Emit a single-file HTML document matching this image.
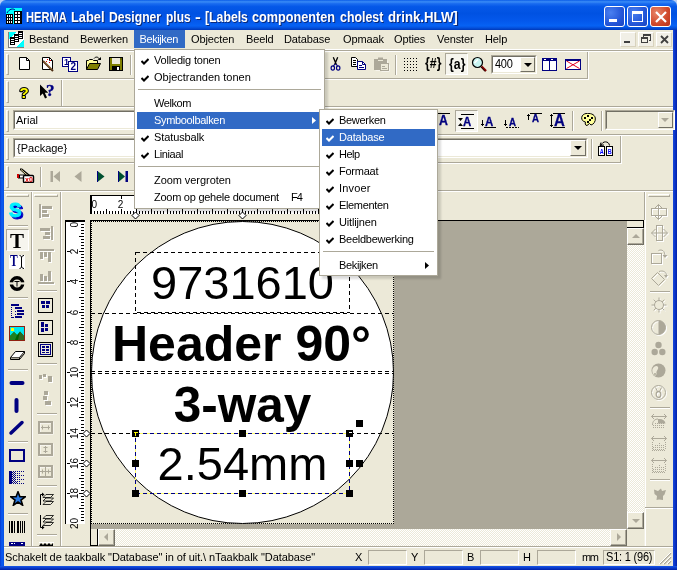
<!DOCTYPE html>
<html><head><meta charset="utf-8">
<style>
html,body{margin:0;padding:0;}
body{width:677px;height:570px;overflow:hidden;position:relative;background:#ECE9D8;font-family:"Liberation Sans",sans-serif;font-size:11px;color:#000;}
div,span,svg{position:absolute;box-sizing:border-box;}
.t{white-space:nowrap;line-height:14px;height:14px;}
/* window frame */
#title{left:0;top:0;width:677px;height:30px;background:linear-gradient(#0a5ce8 0%,#3a8cf6 6%,#1a6cf0 12%,#0558e8 22%,#0052e2 45%,#0458ec 70%,#0662f4 86%,#0450dc 93%,#0038b8 100%);border-radius:6px 6px 0 0;}
#bl{left:0;top:30px;width:4px;height:540px;background:linear-gradient(90deg,#0838d0,#0a55ea 35%,#0a58f0 60%,#0850e0);}
#br{left:673px;top:30px;width:4px;height:540px;background:linear-gradient(90deg,#1848d8,#0c38cc 40%,#0020a8);}
#bb{left:0;top:566px;width:677px;height:4px;background:linear-gradient(#1858e8,#0c40d0 40%,#0020a8);}
#ttext{left:26px;top:9px;color:#fff;font-weight:bold;font-size:13px;line-height:16px;white-space:nowrap;text-shadow:1px 1px 0 #0a2a7a;}
.tb{top:6px;width:21px;height:21px;border-radius:3px;border:1px solid #fff;background:radial-gradient(circle at 30% 30%,#4a80f0,#2456d8 60%,#1a44c0);}
/* menu bar */
#menubar{left:4px;top:30px;width:669px;height:20px;background:#ECE9D8;}
.mi{top:32px;letter-spacing:-0.1px}
/* generic */
.hl{background:#fff;height:1px;}
.sh{background:#ACA899;height:1px;}
.vhl{background:#fff;width:1px;}
.vsh{background:#ACA899;width:1px;}
.grip{width:3px;border-left:1px solid #fff;border-top:1px solid #fff;border-right:1px solid #ACA899;border-bottom:1px solid #ACA899;}
.sep{width:2px;border-left:1px solid #ACA899;border-right:1px solid #fff;}
.menu{background:#fff;border:1px solid #ACA899;box-shadow:3px 3px 2px rgba(0,0,0,0.14);}
.menu .it{left:2px;height:17px;line-height:17px;white-space:nowrap;}
.menu .sel{background:#316AC5;color:#fff;}
.combo{background:#fff;border:1px solid #7F9DB9;}

.hgrip{height:3px;border-left:1px solid #fff;border-top:1px solid #fff;border-right:1px solid #ACA899;border-bottom:1px solid #ACA899;}
.hsep{height:2px;border-top:1px solid #ACA899;border-bottom:1px solid #fff;}
.track{background-color:#fff;background-image:conic-gradient(#ECE9D8 25%,#fff 0 50%,#ECE9D8 0 75%,#fff 0);background-size:2px 2px;}
.btn{background:#ECE9D8;border:1px solid;border-color:#fff #716F64 #716F64 #fff;box-shadow:inset -1px -1px 0 #ACA899;}

.doc{text-align:center;white-space:nowrap;color:#000;}
.hd{width:7px;height:7px;background:#000;}

.menu .t{position:absolute}
.msep{left:3px;height:1px;background:#ACA899;}
.pane{border:1px solid;border-color:#ACA899 #fff #fff #ACA899;}
.mdib{top:32px;width:16px;height:15px;background:#F1EFE6;border:1px solid;border-color:#fff #D8D2BD #D8D2BD #fff}
.tw{top:0;transform-origin:0 3px;white-space:nowrap}
</style></head><body><div id="root" style="left:0;top:0;width:677px;height:570px;will-change:transform">

<!-- title bar -->
<div style="left:0;top:0;width:8px;height:8px;background:#B9CFF5"></div><div style="left:669px;top:0;width:8px;height:8px;background:#B9CFF5"></div>
<div id="title"></div>
<div id="ttext"><span class="tw" style="left:0.3px;transform:scale(0.858,1.1)">HERMA</span><span class="tw" style="left:45.1px;transform:scale(0.986,1.1)">Label</span><span class="tw" style="left:82.5px;transform:scale(0.936,1.1)">Designer</span><span class="tw" style="left:139.6px;transform:scale(0.920,1.1)">plus</span><span class="tw" style="left:168.5px;transform:scale(1.335,1.1)">-</span><span class="tw" style="left:178.7px;transform:scale(0.943,1.1)">[Labels</span><span class="tw" style="left:226.4px;transform:scale(0.974,1.1)">componenten</span><span class="tw" style="left:313.7px;transform:scale(0.951,1.1)">cholest</span><span class="tw" style="left:362.0px;transform:scale(1.017,1.1)">drink.HLW]</span></div>
<div class="tb" style="left:604px"></div>
<div class="tb" style="left:627px"></div>
<div class="tb" style="left:650px;background:radial-gradient(circle at 30% 30%,#e8866a,#d0482a 60%,#b8321a);"></div>

<div style="left:609px;top:19px;width:8px;height:3px;background:#fff"></div>
<div style="left:632px;top:11px;width:11px;height:11px;border:1px solid #fff;border-top-width:3px"></div>
<svg style="left:654px;top:10px" width="14" height="14" viewBox="0 0 14 14"><path d="M2 2L12 12M12 2L2 12" stroke="#fff" stroke-width="2.200"/></svg>
<!-- title icon -->
<svg style="left:6px;top:8px" width="16" height="16" viewBox="0 0 16 16" shape-rendering="crispEdges"><rect width="16" height="16" fill="#00FFFF"/><rect x="0" y="6" width="7" height="10" fill="#000"/><rect x="8" y="3" width="8" height="13" fill="#000"/><path d="M1 5C3 1 7 0 9 2" stroke="#000080" fill="none" shape-rendering="auto"/>
<g fill="#fff"><rect x="1" y="7" width="1" height="2"/><rect x="3" y="7" width="1" height="2"/><rect x="5" y="7" width="1" height="2"/><rect x="1" y="10" width="1" height="2"/><rect x="3" y="10" width="1" height="2"/><rect x="5" y="10" width="1" height="2"/><rect x="1" y="13" width="1" height="2"/><rect x="3" y="13" width="1" height="2"/><rect x="5" y="13" width="1" height="2"/>
<rect x="9" y="4" width="2" height="2"/><rect x="12" y="4" width="2" height="2"/><rect x="9" y="7" width="2" height="2"/><rect x="12" y="7" width="2" height="2"/><rect x="9" y="10" width="2" height="2"/><rect x="12" y="10" width="2" height="2"/><rect x="9" y="13" width="2" height="2"/><rect x="12" y="13" width="2" height="2"/></g></svg>
<div id="bl"></div><div id="br"></div><div id="bb"></div>

<!-- menu bar -->
<div id="menubar"></div>
<div class="t mi" style="left:29px">Bestand</div>
<div class="t mi" style="left:80px">Bewerken</div>
<div style="left:134px;top:30px;width:51px;height:18px;background:#316AC5"></div>
<div class="t mi" style="left:139.500px;color:#fff;letter-spacing:-0.4px">Bekijken</div>
<div class="t mi" style="left:191px">Objecten</div>
<div class="t mi" style="left:246px">Beeld</div>
<div class="t mi" style="left:284px">Database</div>
<div class="t mi" style="left:343px">Opmaak</div>
<div class="t mi" style="left:394px">Opties</div>
<div class="t mi" style="left:437px">Venster</div>
<div class="t mi" style="left:485px">Help</div>

<!-- toolbars placeholder -->


<svg style="left:8px;top:31px" width="16" height="17" viewBox="0 0 16 17" shape-rendering="crispEdges"><rect x="1" y="1" width="15" height="15" fill="#fff"/><path d="M1 1H8L1 9Z" fill="#00FFFF"/><path d="M16 8V16H8Z" fill="#00FFFF"/><rect x="0" y="1" width="1" height="16" fill="#808080"/><rect x="0" y="16" width="16" height="1" fill="#808080"/>
<g fill="#000"><rect x="10" y="0" width="5" height="8"/><rect x="6" y="3" width="5" height="8"/><rect x="2" y="6" width="5" height="8"/></g>
<g fill="#fff"><rect x="11" y="2" width="3" height="1"/><rect x="11" y="4" width="3" height="1"/><rect x="11" y="6" width="3" height="1"/><rect x="7" y="5" width="3" height="1"/><rect x="7" y="7" width="3" height="1"/><rect x="7" y="9" width="3" height="1"/><rect x="3" y="8" width="3" height="1"/><rect x="3" y="10" width="3" height="1"/><rect x="3" y="12" width="3" height="1"/></g></svg>
<div class="mdib" style="left:620px"></div><div class="mdib" style="left:638px"></div><div class="mdib" style="left:656px"></div>
<div style="left:624px;top:41px;width:6px;height:2px;background:#404040"></div>
<svg style="left:641px;top:34px" width="10" height="10" viewBox="0 0 10 10" shape-rendering="crispEdges"><path d="M2.500 2.500V1H9.500V6.500H7.500" fill="none" stroke="#404040" stroke-width="1"/><rect x="2" y="0" width="8" height="2" fill="#404040"/><rect x="0.500" y="3.500" width="6" height="5" fill="none" stroke="#404040"/><rect x="0" y="3" width="7" height="2" fill="#404040"/></svg>
<svg style="left:660px;top:35px" width="9" height="9" viewBox="0 0 9 9"><path d="M1 1L8 8M8 1L1 8" stroke="#404040" stroke-width="1.800"/></svg>
<!-- toolbar rows: highlight/shadow lines -->
<div class="hl" style="left:4px;top:49px;width:669px"></div>
<div class="sh" style="left:4px;top:50px;width:669px"></div>
<div class="hl" style="left:4px;top:51px;width:669px"></div>
<!-- row1 51-79 -->
<div class="sh" style="left:4px;top:78px;width:584px"></div>
<div class="hl" style="left:4px;top:79px;width:585px"></div>
<div class="vsh" style="left:587px;top:52px;height:27px"></div>
<div class="vhl" style="left:588px;top:52px;height:28px"></div>
<div class="grip" style="left:6px;top:54px;height:21px"></div>
<!-- row2 79-107 -->
<div class="vsh" style="left:61px;top:80px;height:26px"></div>
<div class="vhl" style="left:62px;top:80px;height:26px"></div>
<div class="sh" style="left:4px;top:106px;width:669px"></div>
<div class="hl" style="left:4px;top:107px;width:669px"></div>
<div class="grip" style="left:6px;top:81px;height:22px"></div>
<!-- row3 107-135 -->
<div class="sh" style="left:4px;top:134px;width:669px"></div>
<div class="hl" style="left:4px;top:135px;width:669px"></div>
<div class="grip" style="left:6px;top:110px;height:22px"></div>
<!-- row4 135-163 -->
<div class="sh" style="left:4px;top:162px;width:617px"></div>
<div class="hl" style="left:4px;top:163px;width:618px"></div>
<div class="vsh" style="left:620px;top:136px;height:27px"></div>
<div class="vhl" style="left:621px;top:136px;height:28px"></div>
<div class="grip" style="left:6px;top:138px;height:22px"></div>
<!-- row5 163-191 -->
<div class="sh" style="left:4px;top:190px;width:669px"></div>
<div class="hl" style="left:4px;top:191px;width:669px"></div>
<div class="grip" style="left:6px;top:166px;height:22px"></div>

<!-- row1 separators -->
<div class="sep" style="left:130px;top:55px;height:20px"></div>
<div class="sep" style="left:395px;top:55px;height:20px"></div>
<!-- row1 pressed {a} button -->
<div style="left:445px;top:53px;width:23px;height:22px;background:#F6F5EE;border:1px solid;border-color:#ACA899 #fff #fff #ACA899"></div>
<!-- zoom combo -->
<div style="left:491px;top:55px;width:46px;height:19px;background:#fff;border:1px solid;border-color:#ACA899 #fff #fff #ACA899"></div>
<div style="left:492px;top:56px;width:44px;height:17px;border:1px solid;border-color:#716F64 #ECE9D8 #ECE9D8 #716F64"></div>
<div style="left:520px;top:57px;width:15px;height:15px;background:#ECE9D8;border:1px solid;border-color:#fff #716F64 #716F64 #fff"></div>
<div style="left:524px;top:63px;width:0;height:0;border:4px solid transparent;border-top-color:#000;border-bottom:none"></div>
<div class="t" style="left:495px;top:57px;font-size:11px;letter-spacing:-0.3px;transform:scaleY(1.08)">400</div>

<!--ICONS1--><svg style="left:19px;top:57px" width="12" height="13" viewBox="0 0 12 13" ><path d="M0.5 0.5H7.5L10.5 3.5V12.5H0.5Z" fill="#fff" stroke="#000"/><path d="M7.5 0.5V3.5H10.5" fill="none" stroke="#000"/></svg>
<svg style="left:41px;top:56px" width="14" height="16" viewBox="0 0 14 16" ><path d="M1.500 1.500H8.500L11.500 4.500V13.500H1.500Z" fill="#fff" stroke="#000"/><path d="M8.5 1.5V4.500H11.5" fill="none" stroke="#000"/><path d="M2 5L12 15" stroke="#4a2a10" stroke-width="2"/><path d="M3 5.500L11 13.500" stroke="#c8a060" stroke-width="0.800"/><rect x="6" y="3" width="1" height="1" fill="#d00"/><rect x="8" y="6" width="1" height="1" fill="#d00"/><rect x="9" y="4" width="1" height="1" fill="#d00"/><rect x="5" y="5" width="1" height="1" fill="#d00"/></svg>
<svg style="left:62px;top:57px" width="16" height="15" viewBox="0 0 16 15" ><rect x="0.500" y="0.500" width="8" height="9" fill="#fff" stroke="#000080"/><rect x="6.500" y="4.500" width="9" height="10" fill="#fff" stroke="#000080"/><text x="2" y="8" font-family="Liberation Sans,sans-serif" font-weight="bold" font-size="9" fill="#000080">1</text><text x="8.500" y="13" font-family="Liberation Sans,sans-serif" font-weight="bold" font-size="10" fill="#000080">2</text></svg>
<svg style="left:85px;top:56px" width="17" height="15" viewBox="0 0 17 15" ><path d="M1.500 13.500V4.500H3.500L4.500 3.500H7.500L8.500 4.500H12.500V7.500" fill="#FFFF99" stroke="#000"/><path d="M1.500 13.500L4.500 7.500H15.500L12.500 13.500Z" fill="#808000" stroke="#000"/><path d="M9 2.500C10.500 0.500 13.500 0.500 14.500 3.500" fill="none" stroke="#000"/><path d="M12.500 4H16V1Z" fill="#000"/></svg>
<svg style="left:109px;top:57px" width="14" height="14" viewBox="0 0 14 14" ><rect x="0.500" y="0.500" width="13" height="13" fill="#808000" stroke="#000"/><rect x="3" y="1" width="8" height="6" fill="#ECE9D8"/><rect x="3" y="9" width="8" height="4" fill="#000"/><rect x="8" y="10" width="2" height="3" fill="#fff"/><rect x="11.500" y="1.500" width="1" height="1" fill="#000"/></svg><!--/ICONS1-->
<!--ICONS2--><svg style="left:330px;top:57px" width="11" height="14" viewBox="0 0 11 14" ><path d="M3.300 0.300L6.300 7.500M7.700 0.300L4.700 7.500" stroke="#000" stroke-width="1.300" fill="none"/><ellipse cx="2.800" cy="11" rx="1.700" ry="2.200" fill="none" stroke="#000080" stroke-width="1.200"/><ellipse cx="8.200" cy="11" rx="1.700" ry="2.200" fill="none" stroke="#000080" stroke-width="1.200"/><path d="M4.900 7L3.500 9M6.100 7L7.500 9" stroke="#000080" stroke-width="1.200"/></svg>
<svg style="left:351px;top:57px" width="16" height="13" viewBox="0 0 16 13" ><path d="M0.500 0.500H4.500L6.500 2.500V9.500H0.500Z" fill="#fff" stroke="#000"/><path d="M2 3.500H5M2 5.500H5M2 7.500H5" stroke="#000"/><path d="M6.500 4.500H11.500L14.500 7.500V12.500H6.500Z" fill="#fff" stroke="#000080"/><path d="M11.500 4.500V7.500H14.500" fill="none" stroke="#000080"/><path d="M8 8.500H11M8 10.500H13" stroke="#000080"/></svg>
<svg style="left:374px;top:57px" width="16" height="15" viewBox="0 0 16 15" ><rect x="1.500" y="3.500" width="12" height="10" fill="#fff" stroke="none"/><rect x="0.500" y="2.500" width="12" height="10" fill="#ACA899" stroke="#ACA899"/><rect x="4" y="0.500" width="5" height="3" fill="#ACA899"/><rect x="4" y="3" width="5" height="1" fill="#ECE9D8"/><rect x="7.500" y="7.500" width="8" height="7" fill="#fff"/><rect x="6.500" y="6.500" width="8" height="7" fill="#ECE9D8" stroke="#ACA899"/><path d="M8 9.500H11M8 11.500H13" stroke="#ACA899"/></svg>
<svg style="left:404px;top:58px" width="13" height="13" viewBox="0 0 13 13" shape-rendering="crispEdges"><rect x="0" y="0" width="1" height="1" fill="#000"/><rect x="0" y="3" width="1" height="1" fill="#000"/><rect x="0" y="6" width="1" height="1" fill="#000"/><rect x="0" y="9" width="1" height="1" fill="#000"/><rect x="0" y="12" width="1" height="1" fill="#000"/><rect x="3" y="0" width="1" height="1" fill="#000"/><rect x="3" y="3" width="1" height="1" fill="#000"/><rect x="3" y="6" width="1" height="1" fill="#000"/><rect x="3" y="9" width="1" height="1" fill="#000"/><rect x="3" y="12" width="1" height="1" fill="#000"/><rect x="6" y="0" width="1" height="1" fill="#000"/><rect x="6" y="3" width="1" height="1" fill="#000"/><rect x="6" y="6" width="1" height="1" fill="#000"/><rect x="6" y="9" width="1" height="1" fill="#000"/><rect x="6" y="12" width="1" height="1" fill="#000"/><rect x="9" y="0" width="1" height="1" fill="#000"/><rect x="9" y="3" width="1" height="1" fill="#000"/><rect x="9" y="6" width="1" height="1" fill="#000"/><rect x="9" y="9" width="1" height="1" fill="#000"/><rect x="9" y="12" width="1" height="1" fill="#000"/><rect x="12" y="0" width="1" height="1" fill="#000"/><rect x="12" y="3" width="1" height="1" fill="#000"/><rect x="12" y="6" width="1" height="1" fill="#000"/><rect x="12" y="9" width="1" height="1" fill="#000"/><rect x="12" y="12" width="1" height="1" fill="#000"/></svg>
<div class="t" style="left:425px;top:55px;font-size:14px;font-weight:bold;line-height:17px;height:17px;transform:scaleX(0.88);transform-origin:0 0">{#}</div>
<div class="t" style="left:449px;top:56px;font-size:14px;font-weight:bold;line-height:17px;height:17px;transform:scaleX(0.88);transform-origin:0 0">{a}</div>
<svg style="left:471px;top:56px" width="17" height="17" viewBox="0 0 17 17" ><circle cx="6.500" cy="6.500" r="5" fill="#c8f4f0" stroke="#000" stroke-width="1.200"/><path d="M3.500 7L7 3.500" stroke="#fff" stroke-width="1.500"/><path d="M10.500 10.500L15 15" stroke="#800000" stroke-width="2.400"/><path d="M10 11L14 15.500" stroke="#000" stroke-width="0.800"/></svg>
<svg style="left:542px;top:58px" width="15" height="13" viewBox="0 0 15 13" ><rect x="0.500" y="0.500" width="14" height="12" fill="#fff" stroke="#000080"/><rect x="0" y="0" width="15" height="3" fill="#000080"/><rect x="7" y="0" width="1" height="13" fill="#000080"/><rect x="2" y="1" width="2" height="1" fill="#fff"/><rect x="9" y="1" width="2" height="1" fill="#fff"/></svg>
<svg style="left:565px;top:59px" width="16" height="11" viewBox="0 0 16 11" ><rect x="0.500" y="0.500" width="15" height="10" fill="#fff" stroke="#000080"/><rect x="0" y="0" width="16" height="2" fill="#000080"/><path d="M1.500 2L14.500 9.500M14.500 2L1.500 9.500" stroke="#e00020" stroke-width="1"/></svg>
<svg style="left:17px;top:83px" width="14" height="18" viewBox="0 0 14 18" ><text x="7" y="14.500" text-anchor="middle" font-family="Liberation Sans,sans-serif" font-weight="bold" font-size="15" fill="#FFFF00" stroke="#000" stroke-width="2.200" paint-order="stroke" stroke-linejoin="round">?</text></svg>
<svg style="left:40px;top:84px" width="9" height="15" viewBox="0 0 9 15" ><path d="M0 0.500V12L2.800 9.500L5 14.500L7 13.500L4.800 8.800H8.300Z" fill="#000"/></svg>
<div class="t" style="left:46px;top:82px;font-family:Liberation Serif,serif;font-size:17px;font-weight:bold;line-height:18px;height:18px;color:#000080;-webkit-text-stroke:0.4px #000080">?</div><!--/ICONS2-->
<!-- row3 -->
<div style="left:13px;top:110px;width:320px;height:20px;background:#fff;border:1px solid;border-color:#ACA899 #fff #fff #ACA899"></div><div style="left:14px;top:111px;width:318px;height:18px;border:1px solid;border-color:#716F64 #ECE9D8 #ECE9D8 #716F64"></div>
<div class="t" style="left:16px;top:113px">Arial</div>
<div style="left:455px;top:110px;width:23px;height:22px;background:#F6F5EE;border:1px solid;border-color:#ACA899 #fff #fff #ACA899"></div>
<div class="sep" style="left:572px;top:111px;height:20px"></div>
<div class="sep" style="left:601px;top:111px;height:20px"></div>
<div style="left:605px;top:110px;width:70px;height:20px;border:1px solid;border-color:#ACA899 #fff #fff #ACA899"></div>
<div style="left:606px;top:111px;width:68px;height:18px;border:1px solid;border-color:#716F64 #ECE9D8 #ECE9D8 #716F64"></div>
<div style="left:658px;top:112px;width:15px;height:16px;background:#ECE9D8;border:1px solid;border-color:#fff #716F64 #716F64 #fff"></div>
<div style="left:661px;top:118px;width:0;height:0;border:4px solid transparent;border-top-color:#ACA899;border-bottom:none"></div>

<!-- row4 -->
<div style="left:13px;top:138px;width:575px;height:20px;background:#fff;border:1px solid;border-color:#ACA899 #fff #fff #ACA899"></div>
<div style="left:14px;top:139px;width:573px;height:18px;border:1px solid;border-color:#716F64 #ECE9D8 #ECE9D8 #716F64"></div>
<div style="left:570px;top:140px;width:16px;height:16px;background:#ECE9D8;border:1px solid;border-color:#fff #716F64 #716F64 #fff"></div>
<div style="left:574px;top:146px;width:0;height:0;border:4px solid transparent;border-top-color:#000;border-bottom:none"></div>
<div class="t" style="left:17px;top:141px">{Package}</div>
<div class="sep" style="left:591px;top:139px;height:20px"></div>

<!-- row5 -->
<div class="sep" style="left:40px;top:167px;height:20px"></div>


<!-- workspace -->

<!--ICONS3--><div style="left:438px;top:113px;width:12px;height:1px;background:#000"></div>
<div class="t" style="left:439px;top:113px;font-size:14px;font-weight:bold;line-height:14px;height:14px;color:#000080;transform:scaleX(0.88);transform-origin:0 0;-webkit-text-stroke:0.3px #000080">A</div>
<div style="left:461px;top:114px;width:13px;height:1px;background:#000"></div>
<div class="t" style="left:463px;top:115px;font-size:13px;font-weight:bold;line-height:13px;height:13px;color:#000080;transform:scaleX(0.88);transform-origin:0 0;-webkit-text-stroke:0.3px #000080">A</div>
<div style="left:461px;top:128px;width:13px;height:1px;background:#000"></div>
<svg style="left:458px;top:118px" width="5" height="8" viewBox="0 0 5 8" ><path d="M0 0H5L2.500 3Z M0 8H5L2.500 5Z" fill="#000"/></svg>
<div style="left:482px;top:120px;width:1px;height:6px;background:#000"></div><div style="left:481px;top:124px;width:3px;height:1px;background:#000"></div>
<div class="t" style="left:485px;top:115px;font-size:13px;font-weight:bold;line-height:13px;height:13px;color:#000080;transform:scaleX(0.88);transform-origin:0 0;-webkit-text-stroke:0.3px #000080">A</div>
<div style="left:484px;top:127px;width:12px;height:1px;background:#000"></div>
<div style="left:505px;top:120px;width:1px;height:6px;background:#000"></div><div style="left:504px;top:124px;width:3px;height:1px;background:#000"></div>
<div class="t" style="left:509px;top:117px;font-size:11px;font-weight:bold;line-height:11px;height:11px;color:#000080;transform:scaleX(0.88);transform-origin:0 0;-webkit-text-stroke:0.3px #000080">A</div>
<div style="left:506px;top:127px;width:13px;height:1px;background:repeating-linear-gradient(90deg,#000 0 2px,transparent 2px 3px)"></div>
<div style="left:528px;top:114px;width:1px;height:6px;background:#000"></div><div style="left:527px;top:115px;width:3px;height:1px;background:#000"></div>
<div style="left:530px;top:113px;width:12px;height:1px;background:#000"></div>
<div class="t" style="left:532px;top:113px;font-size:11px;font-weight:bold;line-height:11px;height:11px;color:#000080;transform:scaleX(0.88);transform-origin:0 0;-webkit-text-stroke:0.3px #000080">A</div>
<div style="left:551px;top:114px;width:1px;height:13px;background:#000"></div><div style="left:550px;top:115px;width:3px;height:1px;background:#000"></div><div style="left:550px;top:125px;width:3px;height:1px;background:#000"></div>
<div style="left:553px;top:113px;width:12px;height:1px;background:#000"></div>
<div class="t" style="left:554px;top:112px;font-size:17px;font-weight:bold;line-height:17px;height:17px;color:#000080;transform:scaleX(0.88);transform-origin:0 0;-webkit-text-stroke:0.3px #000080">A</div>
<div style="left:553px;top:127px;width:12px;height:1px;background:#000"></div>
<svg style="left:581px;top:113px" width="15" height="14" viewBox="0 0 15 14" ><path d="M5 0.500C9 0 13.500 1 14.300 5C14.800 8.500 12.500 11.500 10 12L8.500 10.500L6 12.500C4 12.500 4 10 4.500 9C2 8.500 0.500 7 0.700 4.500C1 2 3 1 5 0.500Z" fill="#FFFF99" stroke="#000" stroke-width="1"/><rect x="3" y="4" width="2" height="2" fill="#000"/><rect x="6" y="2" width="2" height="2" fill="#000"/><rect x="10" y="4" width="2" height="2" fill="#000"/><rect x="8" y="6" width="2" height="2" fill="#000"/><rect x="6" y="8" width="2" height="2" fill="#000"/></svg>
<svg style="left:598px;top:140px" width="16" height="16" viewBox="0 0 16 16" ><rect x="0.500" y="6.500" width="6" height="9" fill="#fff" stroke="#000"/><rect x="8.500" y="6.500" width="6" height="9" fill="#fff" stroke="#000"/><path d="M3.500 5C4 1 11 0.500 11.500 5.500" fill="none" stroke="#000"/><path d="M2 5.500L3 2.500M2 5.500L6 5" stroke="#000" fill="none"/><text x="1.700" y="13.700" font-family="Liberation Sans,sans-serif" font-weight="bold" font-size="6.500" textLength="4" lengthAdjust="spacingAndGlyphs" fill="#00f">A</text><text x="9.700" y="13.700" font-family="Liberation Sans,sans-serif" font-weight="bold" font-size="6.500" textLength="4" lengthAdjust="spacingAndGlyphs" fill="#00f">B</text></svg>
<svg style="left:17px;top:168px" width="18" height="15" viewBox="0 0 18 15" ><path d="M3 0.500L5 0.500L13 7L11 9L3 2Z" fill="#000"/><path d="M4 1.500L11.500 8" stroke="#e8e0a0" stroke-width="1"/><path d="M1 6.500H9V10.500H1Z" fill="#000"/><rect x="0" y="6" width="2" height="4" fill="#c00"/><rect x="3" y="7.500" width="5" height="2" fill="#fff"/><rect x="6.500" y="7.500" width="10" height="7" rx="1" fill="#fff" stroke="#000" stroke-width="1.400"/><text x="8" y="13.800" font-family="Liberation Sans,sans-serif" font-weight="bold" font-size="7" fill="#d00">x0</text></svg>
<svg style="left:50px;top:171px" width="10" height="11" viewBox="0 0 10 11" ><rect x="0.500" y="0" width="2.500" height="11" fill="#ACA899"/><path d="M10 0V11L3.500 5.500Z" fill="#ACA899"/></svg>
<svg style="left:74px;top:171px" width="8" height="11" viewBox="0 0 8 11" ><path d="M7.500 0V11L0.500 5.500Z" fill="#ACA899"/></svg>
<svg style="left:97px;top:171px" width="8" height="11" viewBox="0 0 8 11" ><path d="M0.500 0V11L7.500 5.500Z" fill="#005030"/><path d="M0.500 0V11" stroke="#000080" stroke-width="1"/></svg>
<svg style="left:118px;top:171px" width="10" height="11" viewBox="0 0 10 11" ><path d="M0.500 0V11L7 5.500Z" fill="#005030"/><path d="M0.500 0V11" stroke="#000080" stroke-width="1"/><rect x="7.500" y="0" width="2.500" height="11" fill="#000080"/></svg><!--/ICONS3-->
<!-- left palette 1: x 4-31 -->
<div class="vsh" style="left:31px;top:192px;height:354px"></div>
<div class="vhl" style="left:32px;top:192px;height:354px"></div>
<div class="vsh" style="left:60px;top:192px;height:354px"></div>
<div class="vhl" style="left:61px;top:192px;height:354px"></div>
<div class="hgrip" style="left:6px;top:194px;width:23px"></div>
<div class="hgrip" style="left:34px;top:194px;width:24px"></div>
<div class="hsep" style="left:8px;top:225px;width:20px"></div>
<div class="hsep" style="left:8px;top:297px;width:20px"></div>
<div class="hsep" style="left:8px;top:369px;width:20px"></div>
<div class="hsep" style="left:8px;top:441px;width:20px"></div>
<div class="hsep" style="left:8px;top:513px;width:20px"></div>
<div class="hsep" style="left:37px;top:290px;width:20px"></div>
<div class="hsep" style="left:37px;top:363px;width:20px"></div>
<div class="hsep" style="left:37px;top:413px;width:20px"></div>
<div class="hsep" style="left:37px;top:485px;width:20px"></div>
<div class="hsep" style="left:37px;top:534px;width:20px"></div>
<!-- pressed T button -->
<div style="left:6px;top:229px;width:23px;height:22px;background:#F6F5EE;border:1px solid;border-color:#ACA899 #fff #fff #ACA899"></div>

<!--ICONS4--><div class="t" style="left:11px;top:201px;font-size:21px;font-weight:bold;line-height:22px;height:22px;color:#0000C0;-webkit-text-stroke:1px #0000C0;transform:scaleX(0.9);transform-origin:0 0">S</div>
<div class="t" style="left:9px;top:199px;font-size:21px;font-weight:bold;line-height:22px;height:22px;color:#00F0FF;-webkit-text-stroke:1px #00F0FF;transform:scaleX(0.9);transform-origin:0 0">S</div>
<div class="t" style="left:10px;top:230px;font-family:'Liberation Serif',serif;font-size:21px;line-height:22px;height:22px;font-weight:bold">T</div>
<div style="left:9px;top:255px;width:16px;height:14px;background:#fff"></div>
<div class="t" style="left:10px;top:253px;font-family:'Liberation Serif',serif;font-size:16px;line-height:16px;height:16px;font-weight:bold;color:#000080;transform:scaleX(0.72);transform-origin:0 0">T</div>
<svg style="left:19px;top:255px" width="6" height="14" viewBox="0 0 6 14" ><path d="M0.500 0.500C2 0.500 2.500 1.500 2.500 3V11C2.500 12.500 2 13.500 0.500 13.500M5 0.500C3.500 0.500 2.500 1.500 2.500 3M2.500 11C2.500 12.500 3.500 13.500 5 13.500" fill="none" stroke="#000" stroke-width="1"/></svg>
<svg style="left:9px;top:276px" width="16" height="15" viewBox="0 0 16 15" ><circle cx="8" cy="7.500" r="5.700" fill="none" stroke="#000" stroke-width="3.400"/><rect x="0" y="6.300" width="4.500" height="2.200" fill="#ECE9D8"/><rect x="11.500" y="6.300" width="4.500" height="2.200" fill="#ECE9D8"/><rect x="5.500" y="5" width="5" height="1" fill="#000"/><rect x="7.500" y="5" width="1" height="5.500" fill="#000"/></svg>
<svg style="left:10px;top:303px" width="15" height="16" viewBox="0 0 15 16" shape-rendering="crispEdges"><rect x="1" y="1" width="8" height="2" fill="#000080"/><rect x="5" y="4" width="7" height="2" fill="#000080"/><rect x="7" y="7" width="7" height="2" fill="#000080"/><rect x="7" y="10" width="7" height="2" fill="#000080"/><rect x="5" y="13" width="7" height="2" fill="#000080"/><rect x="1" y="4" width="1" height="1" fill="#000080"/><rect x="1" y="6" width="1" height="1" fill="#000080"/><rect x="1" y="8" width="1" height="1" fill="#000080"/><rect x="1" y="10" width="1" height="1" fill="#000080"/><rect x="1" y="12" width="1" height="1" fill="#000080"/><rect x="1" y="14" width="1" height="1" fill="#000080"/><rect x="2" y="14" width="2" height="1" fill="#000080"/><rect x="5" y="8" width="1" height="1" fill="#000080"/><rect x="5" y="11" width="1" height="1" fill="#000080"/></svg>
<svg style="left:9px;top:326px" width="16" height="15" viewBox="0 0 16 15" ><rect x="0.500" y="0.500" width="15" height="14" fill="#00E8F0" stroke="#902010"/><rect x="2" y="2" width="3" height="3" fill="#FFFF00"/><path d="M1 14V10L5 6L8 9L11 5.500L15 10V14Z" fill="#006000"/><path d="M5 6L8 9L6 14H1V10Z" fill="#208020"/><path d="M11 5.500L15 10V14H9Z" fill="#306820"/></svg>
<svg style="left:9px;top:350px" width="17" height="11" viewBox="0 0 17 11" ><path d="M6.500 1.500H15.500L10.500 7.500H1.500Z" fill="#fff" stroke="#000"/><path d="M1.500 7.500V9.500H10.500V7.500M10.500 9.500L15.500 3.500V1.500" fill="#ACA899" stroke="#000"/></svg>
<svg style="left:9px;top:380px" width="16" height="6" viewBox="0 0 16 6" ><path d="M2.500 3H13.500" stroke="#000080" stroke-width="4" stroke-linecap="round"/></svg>
<svg style="left:14px;top:397px" width="6" height="17" viewBox="0 0 6 17" ><path d="M2.500 3V14" stroke="#000080" stroke-width="4" stroke-linecap="round"/></svg>
<svg style="left:8px;top:419px" width="17" height="17" viewBox="0 0 17 17" ><path d="M3 14L14 3.500" stroke="#000080" stroke-width="3.500" stroke-linecap="round"/></svg>
<div style="left:9px;top:449px;width:16px;height:13px;border:2px solid #000080"></div>
<svg style="left:9px;top:471px" width="15" height="13" viewBox="0 0 15 13" shape-rendering="crispEdges"><rect x="0" y="0" width="1" height="1" fill="#000080"/><rect x="1" y="0" width="1" height="1" fill="#000080"/><rect x="2" y="0" width="1" height="1" fill="#000080"/><rect x="4" y="0" width="1" height="1" fill="#000080"/><rect x="6" y="0" width="1" height="1" fill="#000080"/><rect x="8" y="0" width="1" height="1" fill="#000080"/><rect x="10" y="0" width="1" height="1" fill="#000080"/><rect x="12" y="0" width="1" height="1" fill="#000080"/><rect x="14" y="0" width="1" height="1" fill="#000080"/><rect x="0" y="1" width="1" height="1" fill="#000080"/><rect x="1" y="1" width="1" height="1" fill="#000080"/><rect x="2" y="1" width="1" height="1" fill="#000080"/><rect x="3" y="1" width="1" height="1" fill="#000080"/><rect x="5" y="1" width="1" height="1" fill="#000080"/><rect x="0" y="2" width="1" height="1" fill="#000080"/><rect x="1" y="2" width="1" height="1" fill="#000080"/><rect x="2" y="2" width="1" height="1" fill="#000080"/><rect x="4" y="2" width="1" height="1" fill="#000080"/><rect x="6" y="2" width="1" height="1" fill="#000080"/><rect x="8" y="2" width="1" height="1" fill="#000080"/><rect x="10" y="2" width="1" height="1" fill="#000080"/><rect x="0" y="3" width="1" height="1" fill="#000080"/><rect x="1" y="3" width="1" height="1" fill="#000080"/><rect x="2" y="3" width="1" height="1" fill="#000080"/><rect x="3" y="3" width="1" height="1" fill="#000080"/><rect x="5" y="3" width="1" height="1" fill="#000080"/><rect x="0" y="4" width="1" height="1" fill="#000080"/><rect x="1" y="4" width="1" height="1" fill="#000080"/><rect x="2" y="4" width="1" height="1" fill="#000080"/><rect x="4" y="4" width="1" height="1" fill="#000080"/><rect x="6" y="4" width="1" height="1" fill="#000080"/><rect x="8" y="4" width="1" height="1" fill="#000080"/><rect x="10" y="4" width="1" height="1" fill="#000080"/><rect x="12" y="4" width="1" height="1" fill="#000080"/><rect x="14" y="4" width="1" height="1" fill="#000080"/><rect x="0" y="5" width="1" height="1" fill="#000080"/><rect x="1" y="5" width="1" height="1" fill="#000080"/><rect x="2" y="5" width="1" height="1" fill="#000080"/><rect x="3" y="5" width="1" height="1" fill="#000080"/><rect x="5" y="5" width="1" height="1" fill="#000080"/><rect x="0" y="6" width="1" height="1" fill="#000080"/><rect x="1" y="6" width="1" height="1" fill="#000080"/><rect x="2" y="6" width="1" height="1" fill="#000080"/><rect x="4" y="6" width="1" height="1" fill="#000080"/><rect x="6" y="6" width="1" height="1" fill="#000080"/><rect x="8" y="6" width="1" height="1" fill="#000080"/><rect x="10" y="6" width="1" height="1" fill="#000080"/><rect x="0" y="7" width="1" height="1" fill="#000080"/><rect x="1" y="7" width="1" height="1" fill="#000080"/><rect x="2" y="7" width="1" height="1" fill="#000080"/><rect x="3" y="7" width="1" height="1" fill="#000080"/><rect x="5" y="7" width="1" height="1" fill="#000080"/><rect x="0" y="8" width="1" height="1" fill="#000080"/><rect x="1" y="8" width="1" height="1" fill="#000080"/><rect x="2" y="8" width="1" height="1" fill="#000080"/><rect x="4" y="8" width="1" height="1" fill="#000080"/><rect x="6" y="8" width="1" height="1" fill="#000080"/><rect x="8" y="8" width="1" height="1" fill="#000080"/><rect x="10" y="8" width="1" height="1" fill="#000080"/><rect x="12" y="8" width="1" height="1" fill="#000080"/><rect x="14" y="8" width="1" height="1" fill="#000080"/><rect x="0" y="9" width="1" height="1" fill="#000080"/><rect x="1" y="9" width="1" height="1" fill="#000080"/><rect x="2" y="9" width="1" height="1" fill="#000080"/><rect x="3" y="9" width="1" height="1" fill="#000080"/><rect x="5" y="9" width="1" height="1" fill="#000080"/><rect x="0" y="10" width="1" height="1" fill="#000080"/><rect x="1" y="10" width="1" height="1" fill="#000080"/><rect x="2" y="10" width="1" height="1" fill="#000080"/><rect x="4" y="10" width="1" height="1" fill="#000080"/><rect x="6" y="10" width="1" height="1" fill="#000080"/><rect x="8" y="10" width="1" height="1" fill="#000080"/><rect x="10" y="10" width="1" height="1" fill="#000080"/><rect x="0" y="11" width="1" height="1" fill="#000080"/><rect x="1" y="11" width="1" height="1" fill="#000080"/><rect x="2" y="11" width="1" height="1" fill="#000080"/><rect x="3" y="11" width="1" height="1" fill="#000080"/><rect x="5" y="11" width="1" height="1" fill="#000080"/><rect x="7" y="11" width="1" height="1" fill="#000080"/><rect x="0" y="12" width="1" height="1" fill="#000080"/><rect x="1" y="12" width="1" height="1" fill="#000080"/><rect x="2" y="12" width="1" height="1" fill="#000080"/><rect x="4" y="12" width="1" height="1" fill="#000080"/><rect x="6" y="12" width="1" height="1" fill="#000080"/><rect x="8" y="12" width="1" height="1" fill="#000080"/><rect x="10" y="12" width="1" height="1" fill="#000080"/><rect x="12" y="12" width="1" height="1" fill="#000080"/><rect x="14" y="12" width="1" height="1" fill="#000080"/></svg>
<svg style="left:10px;top:491px" width="16" height="15" viewBox="0 0 16 15" ><path d="M8 0.800L9.900 5.800H15.200L11 9L12.600 14.200L8 11L3.400 14.200L5 9L0.800 5.800H6.100Z" fill="#2878E0" stroke="#000" stroke-width="1.600" stroke-linejoin="miter"/></svg>
<svg style="left:9px;top:521px" width="16" height="13" viewBox="0 0 16 13" shape-rendering="crispEdges"><rect x="0" y="0" width="1" height="12" fill="#000"/><rect x="2" y="0" width="2" height="12" fill="#000"/><rect x="5" y="0" width="1" height="12" fill="#000"/><rect x="8" y="0" width="2" height="12" fill="#000"/><rect x="11" y="0" width="1" height="12" fill="#000"/><rect x="13" y="0" width="1" height="12" fill="#000"/><rect x="15" y="0" width="1" height="12" fill="#000"/></svg>
<svg style="left:9px;top:542px" width="16" height="4" viewBox="0 0 16 4" shape-rendering="crispEdges"><rect x="0" y="0" width="16" height="4" fill="#000080"/><rect x="2" y="1" width="2" height="1" fill="#fff"/><rect x="5" y="1" width="1" height="1" fill="#fff"/><rect x="12" y="1" width="2" height="1" fill="#fff"/></svg>
<svg style="left:39px;top:204px" width="16" height="16" viewBox="0 0 16 16" shape-rendering="crispEdges"><rect x="1" y="1" width="2" height="14" fill="#fff"/><rect x="4" y="3" width="10" height="3" fill="#fff"/><rect x="4" y="7" width="5" height="3" fill="#fff"/><rect x="4" y="11" width="7" height="3" fill="#fff"/><rect x="0" y="0" width="2" height="14" fill="#ACA899"/><rect x="3" y="2" width="10" height="3" fill="#ACA899"/><rect x="3" y="6" width="5" height="3" fill="#ACA899"/><rect x="3" y="10" width="7" height="3" fill="#ACA899"/></svg>
<svg style="left:39px;top:226px" width="16" height="16" viewBox="0 0 16 16" shape-rendering="crispEdges"><rect x="13" y="1" width="2" height="14" fill="#fff"/><rect x="2" y="3" width="10" height="3" fill="#fff"/><rect x="7" y="7" width="5" height="3" fill="#fff"/><rect x="5" y="11" width="7" height="3" fill="#fff"/><rect x="12" y="0" width="2" height="14" fill="#ACA899"/><rect x="1" y="2" width="10" height="3" fill="#ACA899"/><rect x="6" y="6" width="5" height="3" fill="#ACA899"/><rect x="4" y="10" width="7" height="3" fill="#ACA899"/></svg>
<svg style="left:38px;top:249px" width="18" height="15" viewBox="0 0 18 15" shape-rendering="crispEdges"><rect x="1" y="1" width="16" height="2" fill="#fff"/><rect x="3" y="4" width="3" height="7" fill="#fff"/><rect x="7" y="4" width="3" height="5" fill="#fff"/><rect x="11" y="4" width="3" height="10" fill="#fff"/><rect x="0" y="0" width="16" height="2" fill="#ACA899"/><rect x="2" y="3" width="3" height="7" fill="#ACA899"/><rect x="6" y="3" width="3" height="5" fill="#ACA899"/><rect x="10" y="3" width="3" height="10" fill="#ACA899"/></svg>
<svg style="left:38px;top:270px" width="18" height="15" viewBox="0 0 18 15" shape-rendering="crispEdges"><rect x="1" y="13" width="16" height="2" fill="#fff"/><rect x="3" y="5" width="3" height="7" fill="#fff"/><rect x="7" y="7" width="3" height="5" fill="#fff"/><rect x="11" y="2" width="3" height="10" fill="#fff"/><rect x="0" y="12" width="16" height="2" fill="#ACA899"/><rect x="2" y="4" width="3" height="7" fill="#ACA899"/><rect x="6" y="6" width="3" height="5" fill="#ACA899"/><rect x="10" y="1" width="3" height="10" fill="#ACA899"/></svg>
<svg style="left:38px;top:298px" width="15" height="15" viewBox="0 0 15 15" shape-rendering="crispEdges"><rect x="0.500" y="0.500" width="14" height="14" fill="none" stroke="#000" stroke-width="1.300"/><rect x="3" y="3" width="4" height="3" fill="#000080"/><rect x="8" y="3" width="4" height="3" fill="#000080"/><rect x="4" y="7" width="3" height="3" fill="#000080"/><rect x="8" y="7" width="3" height="3" fill="#000080"/></svg>
<svg style="left:38px;top:320px" width="15" height="15" viewBox="0 0 15 15" shape-rendering="crispEdges"><rect x="0.500" y="0.500" width="14" height="14" fill="none" stroke="#000" stroke-width="1.300"/><rect x="3" y="2" width="3" height="5" fill="#000080"/><rect x="7" y="4" width="3" height="3" fill="#000080"/><rect x="3" y="8" width="3" height="4" fill="#000080"/><rect x="7" y="8" width="3" height="3" fill="#000080"/></svg>
<svg style="left:38px;top:342px" width="15" height="15" viewBox="0 0 15 15" shape-rendering="crispEdges"><rect x="0.500" y="0.500" width="14" height="14" fill="none" stroke="#000" stroke-width="1.300"/><rect x="2" y="2" width="11" height="1" fill="#000080"/><rect x="2" y="12" width="11" height="1" fill="#000080"/><rect x="2" y="2" width="1" height="11" fill="#000080"/><rect x="12" y="2" width="1" height="11" fill="#000080"/><rect x="4" y="4" width="3" height="2" fill="#000080"/><rect x="8" y="4" width="3" height="2" fill="#000080"/><rect x="4" y="7" width="3" height="2" fill="#000080"/><rect x="8" y="7" width="3" height="2" fill="#000080"/><rect x="4" y="10" width="3" height="1" fill="#000080"/><rect x="8" y="10" width="3" height="1" fill="#000080"/></svg>
<svg style="left:39px;top:374px" width="16" height="11" viewBox="0 0 16 11" shape-rendering="crispEdges"><rect x="1" y="2" width="3" height="4" fill="#fff"/><rect x="5" y="1" width="3" height="3" fill="#fff"/><rect x="10" y="3" width="4" height="6" fill="#fff"/><rect x="0" y="1" width="3" height="4" fill="#ACA899"/><rect x="4" y="0" width="3" height="3" fill="#ACA899"/><rect x="9" y="2" width="4" height="6" fill="#ACA899"/></svg>
<svg style="left:43px;top:391px" width="11" height="15" viewBox="0 0 11 15" shape-rendering="crispEdges"><rect x="2" y="1" width="4" height="4" fill="#fff"/><rect x="1" y="6" width="4" height="4" fill="#fff"/><rect x="3" y="11" width="6" height="4" fill="#fff"/><rect x="1" y="0" width="4" height="4" fill="#ACA899"/><rect x="0" y="5" width="4" height="4" fill="#ACA899"/><rect x="2" y="10" width="6" height="4" fill="#ACA899"/></svg>
<svg style="left:38px;top:421px" width="16" height="14" viewBox="0 0 16 14" ><rect x="1.500" y="1.500" width="13" height="11" fill="none" stroke="#fff" stroke-width="2"/><rect x="1" y="1" width="13" height="11" fill="none" stroke="#ACA899" stroke-width="2"/><path d="M3 6.500H12M4.500 4.500V8.500M10.500 4.500V8.500" stroke="#ACA899"/></svg>
<svg style="left:38px;top:443px" width="16" height="14" viewBox="0 0 16 14" ><rect x="1.500" y="1.500" width="13" height="11" fill="none" stroke="#fff" stroke-width="2"/><rect x="1" y="1" width="13" height="11" fill="none" stroke="#ACA899" stroke-width="2"/><path d="M7.500 3V10M5.500 4.500H9.500M5.500 8.500H9.500" stroke="#ACA899"/></svg>
<svg style="left:38px;top:465px" width="16" height="14" viewBox="0 0 16 14" ><rect x="1.500" y="1.500" width="13" height="11" fill="none" stroke="#fff" stroke-width="2"/><rect x="1" y="1" width="13" height="11" fill="none" stroke="#ACA899" stroke-width="2"/><path d="M7.500 2V11M2 6.500H13M4.500 4.500V8.500M10.500 4.500V8.500" stroke="#ACA899"/></svg>
<svg style="left:39px;top:492px" width="15" height="15" viewBox="0 0 15 15" ><path d="M1.500 13V2.500H4" fill="none" stroke="#000"/><path d="M3 0.500L5.500 2.500L3 4.500Z" fill="#000"/><path d="M7 2.500H14.500L11.500 5.500H4Z M7 6H14.500L11.500 9H4Z M7 9.500H14.500L11.500 12.500H4Z" fill="#ECE9D8" stroke="#000" stroke-width="0.800"/></svg>
<svg style="left:39px;top:514px" width="15" height="16" viewBox="0 0 15 16" ><path d="M1.500 1V13.500H4" fill="none" stroke="#000"/><path d="M3 11.500L5.500 13.500L3 15.500Z" fill="#000"/><g transform="translate(0,-1)"><path d="M7 2.500H14.500L11.500 5.500H4Z M7 6H14.500L11.500 9H4Z M7 9.500H14.500L11.500 12.500H4Z" fill="#ECE9D8" stroke="#000" stroke-width="0.800"/></g></svg>
<svg style="left:39px;top:542px" width="15" height="4" viewBox="0 0 15 4" ><path d="M0 4L2 1L4 3L6 1L8 3L10 1L12 3L14 1V4Z" fill="#000"/><rect x="0" y="0" width="15" height="1" fill="#fff"/></svg><!--/ICONS4-->
<!-- MDI area -->
<div style="left:62px;top:192px;width:582px;height:354px;background:#ECE9D8"></div>
<!-- gray workspace -->
<div style="left:90px;top:220px;width:537px;height:309px;background:#ACA899"></div>
<div style="left:90px;top:220px;width:537px;height:1px;background:#000"></div>
<div style="left:90px;top:220px;width:1px;height:326px;background:#000"></div>
<!-- page -->
<div style="left:91px;top:221px;width:303px;height:303px;background:#ECE9D8;border:1px dotted #000"></div>
<svg style="left:91px;top:221px" width="303" height="303" viewBox="0 0 303 303"><circle cx="151.5" cy="151.5" r="151" fill="#fff" stroke="#000" stroke-width="1"/></svg>

<!-- top ruler -->
<div style="left:90px;top:195px;width:304px;height:19px;background:#fff;border-left:2px solid #000;border-top:1px solid #000"></div>
<svg style="left:90px;top:195px;overflow:visible" width="304" height="20" viewBox="0 0 304 20" shape-rendering="crispEdges">
<rect x="1" y="1" width="1" height="3" fill="#000"/><rect x="1" y="14" width="1" height="5" fill="#000"/>
<rect x="4" y="16" width="1" height="3" fill="#000"/>
<rect x="7" y="16" width="1" height="3" fill="#000"/>
<rect x="10" y="16" width="1" height="3" fill="#000"/>
<rect x="13" y="16" width="1" height="3" fill="#000"/>
<rect x="16" y="14" width="1" height="5" fill="#000"/>
<rect x="19" y="16" width="1" height="3" fill="#000"/>
<rect x="22" y="16" width="1" height="3" fill="#000"/>
<rect x="25" y="16" width="1" height="3" fill="#000"/>
<rect x="28" y="16" width="1" height="3" fill="#000"/>
<rect x="31" y="1" width="1" height="3" fill="#000"/><rect x="31" y="14" width="1" height="5" fill="#000"/>
<rect x="34" y="16" width="1" height="3" fill="#000"/>
<rect x="37" y="16" width="1" height="3" fill="#000"/>
<rect x="40" y="16" width="1" height="3" fill="#000"/>
<rect x="43" y="16" width="1" height="3" fill="#000"/>
<rect x="46" y="14" width="1" height="5" fill="#000"/>
<rect x="49" y="16" width="1" height="3" fill="#000"/>
<rect x="52" y="16" width="1" height="3" fill="#000"/>
<rect x="55" y="16" width="1" height="3" fill="#000"/>
<rect x="58" y="16" width="1" height="3" fill="#000"/>
<rect x="61" y="1" width="1" height="3" fill="#000"/><rect x="61" y="14" width="1" height="5" fill="#000"/>
<rect x="64" y="16" width="1" height="3" fill="#000"/>
<rect x="67" y="16" width="1" height="3" fill="#000"/>
<rect x="70" y="16" width="1" height="3" fill="#000"/>
<rect x="73" y="16" width="1" height="3" fill="#000"/>
<rect x="77" y="14" width="1" height="5" fill="#000"/>
<rect x="80" y="16" width="1" height="3" fill="#000"/>
<rect x="83" y="16" width="1" height="3" fill="#000"/>
<rect x="86" y="16" width="1" height="3" fill="#000"/>
<rect x="89" y="16" width="1" height="3" fill="#000"/>
<rect x="92" y="1" width="1" height="3" fill="#000"/><rect x="92" y="14" width="1" height="5" fill="#000"/>
<rect x="95" y="16" width="1" height="3" fill="#000"/>
<rect x="98" y="16" width="1" height="3" fill="#000"/>
<rect x="101" y="16" width="1" height="3" fill="#000"/>
<rect x="104" y="16" width="1" height="3" fill="#000"/>
<rect x="107" y="14" width="1" height="5" fill="#000"/>
<rect x="110" y="16" width="1" height="3" fill="#000"/>
<rect x="113" y="16" width="1" height="3" fill="#000"/>
<rect x="116" y="16" width="1" height="3" fill="#000"/>
<rect x="119" y="16" width="1" height="3" fill="#000"/>
<rect x="122" y="1" width="1" height="3" fill="#000"/><rect x="122" y="14" width="1" height="5" fill="#000"/>
<rect x="125" y="16" width="1" height="3" fill="#000"/>
<rect x="128" y="16" width="1" height="3" fill="#000"/>
<rect x="131" y="16" width="1" height="3" fill="#000"/>
<rect x="134" y="16" width="1" height="3" fill="#000"/>
<rect x="137" y="14" width="1" height="5" fill="#000"/>
<rect x="140" y="16" width="1" height="3" fill="#000"/>
<rect x="143" y="16" width="1" height="3" fill="#000"/>
<rect x="146" y="16" width="1" height="3" fill="#000"/>
<rect x="149" y="16" width="1" height="3" fill="#000"/>
<rect x="152" y="1" width="1" height="3" fill="#000"/><rect x="152" y="14" width="1" height="5" fill="#000"/>
<rect x="155" y="16" width="1" height="3" fill="#000"/>
<rect x="158" y="16" width="1" height="3" fill="#000"/>
<rect x="161" y="16" width="1" height="3" fill="#000"/>
<rect x="164" y="16" width="1" height="3" fill="#000"/>
<rect x="167" y="14" width="1" height="5" fill="#000"/>
<rect x="170" y="16" width="1" height="3" fill="#000"/>
<rect x="173" y="16" width="1" height="3" fill="#000"/>
<rect x="176" y="16" width="1" height="3" fill="#000"/>
<rect x="179" y="16" width="1" height="3" fill="#000"/>
<rect x="182" y="1" width="1" height="3" fill="#000"/><rect x="182" y="14" width="1" height="5" fill="#000"/>
<rect x="185" y="16" width="1" height="3" fill="#000"/>
<rect x="188" y="16" width="1" height="3" fill="#000"/>
<rect x="191" y="16" width="1" height="3" fill="#000"/>
<rect x="194" y="16" width="1" height="3" fill="#000"/>
<rect x="197" y="14" width="1" height="5" fill="#000"/>
<rect x="200" y="16" width="1" height="3" fill="#000"/>
<rect x="204" y="16" width="1" height="3" fill="#000"/>
<rect x="207" y="16" width="1" height="3" fill="#000"/>
<rect x="210" y="16" width="1" height="3" fill="#000"/>
<rect x="213" y="1" width="1" height="3" fill="#000"/><rect x="213" y="14" width="1" height="5" fill="#000"/>
<rect x="216" y="16" width="1" height="3" fill="#000"/>
<rect x="219" y="16" width="1" height="3" fill="#000"/>
<rect x="222" y="16" width="1" height="3" fill="#000"/>
<rect x="225" y="16" width="1" height="3" fill="#000"/>
<rect x="228" y="14" width="1" height="5" fill="#000"/>
<rect x="231" y="16" width="1" height="3" fill="#000"/>
<rect x="234" y="16" width="1" height="3" fill="#000"/>
<rect x="237" y="16" width="1" height="3" fill="#000"/>
<rect x="240" y="16" width="1" height="3" fill="#000"/>
<rect x="243" y="1" width="1" height="3" fill="#000"/><rect x="243" y="14" width="1" height="5" fill="#000"/>
<rect x="246" y="16" width="1" height="3" fill="#000"/>
<rect x="249" y="16" width="1" height="3" fill="#000"/>
<rect x="252" y="16" width="1" height="3" fill="#000"/>
<rect x="255" y="16" width="1" height="3" fill="#000"/>
<rect x="258" y="14" width="1" height="5" fill="#000"/>
<rect x="261" y="16" width="1" height="3" fill="#000"/>
<rect x="264" y="16" width="1" height="3" fill="#000"/>
<rect x="267" y="16" width="1" height="3" fill="#000"/>
<rect x="270" y="16" width="1" height="3" fill="#000"/>
<rect x="273" y="1" width="1" height="3" fill="#000"/><rect x="273" y="14" width="1" height="5" fill="#000"/>
<rect x="276" y="16" width="1" height="3" fill="#000"/>
<rect x="279" y="16" width="1" height="3" fill="#000"/>
<rect x="282" y="16" width="1" height="3" fill="#000"/>
<rect x="285" y="16" width="1" height="3" fill="#000"/>
<rect x="288" y="14" width="1" height="5" fill="#000"/>
<rect x="291" y="16" width="1" height="3" fill="#000"/>
<rect x="294" y="16" width="1" height="3" fill="#000"/>
<rect x="297" y="16" width="1" height="3" fill="#000"/>
<rect x="300" y="16" width="1" height="3" fill="#000"/>
<text x="1.500" y="12.700" font-family="Liberation Sans,sans-serif" font-size="10" fill="#000">0</text>
<text x="30.5" y="12.700" text-anchor="middle" font-family="Liberation Sans,sans-serif" font-size="10" fill="#000">2</text>
<text x="60.5" y="12.700" text-anchor="middle" font-family="Liberation Sans,sans-serif" font-size="10" fill="#000">4</text>
<text x="91.5" y="12.700" text-anchor="middle" font-family="Liberation Sans,sans-serif" font-size="10" fill="#000">6</text>
<text x="121.5" y="12.700" text-anchor="middle" font-family="Liberation Sans,sans-serif" font-size="10" fill="#000">8</text>
<text x="151.5" y="12.700" text-anchor="middle" font-family="Liberation Sans,sans-serif" font-size="10" fill="#000">10</text>
<text x="181.5" y="12.700" text-anchor="middle" font-family="Liberation Sans,sans-serif" font-size="10" fill="#000">12</text>
<text x="212.5" y="12.700" text-anchor="middle" font-family="Liberation Sans,sans-serif" font-size="10" fill="#000">14</text>
<text x="242.5" y="12.700" text-anchor="middle" font-family="Liberation Sans,sans-serif" font-size="10" fill="#000">16</text>
<text x="272.5" y="12.700" text-anchor="middle" font-family="Liberation Sans,sans-serif" font-size="10" fill="#000">18</text>
<text x="302.5" y="12.700" text-anchor="middle" font-family="Liberation Sans,sans-serif" font-size="10" fill="#000">20</text>
</svg>
<!-- left ruler -->
<div style="left:65px;top:220px;width:20px;height:304px;background:#fff;border-left:1px solid #000;border-top:2px solid #000"></div>
<svg style="left:65px;top:220px;overflow:visible" width="20" height="304" viewBox="0 0 20 304" shape-rendering="crispEdges">
<rect x="2" y="1" width="3" height="1" fill="#000"/><rect x="14" y="1" width="5" height="1" fill="#000"/>
<rect x="16" y="4" width="3" height="1" fill="#000"/>
<rect x="16" y="7" width="3" height="1" fill="#000"/>
<rect x="16" y="10" width="3" height="1" fill="#000"/>
<rect x="16" y="13" width="3" height="1" fill="#000"/>
<rect x="14" y="16" width="5" height="1" fill="#000"/>
<rect x="16" y="19" width="3" height="1" fill="#000"/>
<rect x="16" y="22" width="3" height="1" fill="#000"/>
<rect x="16" y="25" width="3" height="1" fill="#000"/>
<rect x="16" y="28" width="3" height="1" fill="#000"/>
<rect x="2" y="31" width="3" height="1" fill="#000"/><rect x="14" y="31" width="5" height="1" fill="#000"/>
<rect x="16" y="34" width="3" height="1" fill="#000"/>
<rect x="16" y="37" width="3" height="1" fill="#000"/>
<rect x="16" y="40" width="3" height="1" fill="#000"/>
<rect x="16" y="43" width="3" height="1" fill="#000"/>
<rect x="14" y="46" width="5" height="1" fill="#000"/>
<rect x="16" y="49" width="3" height="1" fill="#000"/>
<rect x="16" y="52" width="3" height="1" fill="#000"/>
<rect x="16" y="55" width="3" height="1" fill="#000"/>
<rect x="16" y="58" width="3" height="1" fill="#000"/>
<rect x="2" y="61" width="3" height="1" fill="#000"/><rect x="14" y="61" width="5" height="1" fill="#000"/>
<rect x="16" y="64" width="3" height="1" fill="#000"/>
<rect x="16" y="67" width="3" height="1" fill="#000"/>
<rect x="16" y="70" width="3" height="1" fill="#000"/>
<rect x="16" y="73" width="3" height="1" fill="#000"/>
<rect x="14" y="77" width="5" height="1" fill="#000"/>
<rect x="16" y="80" width="3" height="1" fill="#000"/>
<rect x="16" y="83" width="3" height="1" fill="#000"/>
<rect x="16" y="86" width="3" height="1" fill="#000"/>
<rect x="16" y="89" width="3" height="1" fill="#000"/>
<rect x="2" y="92" width="3" height="1" fill="#000"/><rect x="14" y="92" width="5" height="1" fill="#000"/>
<rect x="16" y="95" width="3" height="1" fill="#000"/>
<rect x="16" y="98" width="3" height="1" fill="#000"/>
<rect x="16" y="101" width="3" height="1" fill="#000"/>
<rect x="16" y="104" width="3" height="1" fill="#000"/>
<rect x="14" y="107" width="5" height="1" fill="#000"/>
<rect x="16" y="110" width="3" height="1" fill="#000"/>
<rect x="16" y="113" width="3" height="1" fill="#000"/>
<rect x="16" y="116" width="3" height="1" fill="#000"/>
<rect x="16" y="119" width="3" height="1" fill="#000"/>
<rect x="2" y="122" width="3" height="1" fill="#000"/><rect x="14" y="122" width="5" height="1" fill="#000"/>
<rect x="16" y="125" width="3" height="1" fill="#000"/>
<rect x="16" y="128" width="3" height="1" fill="#000"/>
<rect x="16" y="131" width="3" height="1" fill="#000"/>
<rect x="16" y="134" width="3" height="1" fill="#000"/>
<rect x="14" y="137" width="5" height="1" fill="#000"/>
<rect x="16" y="140" width="3" height="1" fill="#000"/>
<rect x="16" y="143" width="3" height="1" fill="#000"/>
<rect x="16" y="146" width="3" height="1" fill="#000"/>
<rect x="16" y="149" width="3" height="1" fill="#000"/>
<rect x="2" y="152" width="3" height="1" fill="#000"/><rect x="14" y="152" width="5" height="1" fill="#000"/>
<rect x="16" y="155" width="3" height="1" fill="#000"/>
<rect x="16" y="158" width="3" height="1" fill="#000"/>
<rect x="16" y="161" width="3" height="1" fill="#000"/>
<rect x="16" y="164" width="3" height="1" fill="#000"/>
<rect x="14" y="167" width="5" height="1" fill="#000"/>
<rect x="16" y="170" width="3" height="1" fill="#000"/>
<rect x="16" y="173" width="3" height="1" fill="#000"/>
<rect x="16" y="176" width="3" height="1" fill="#000"/>
<rect x="16" y="179" width="3" height="1" fill="#000"/>
<rect x="2" y="182" width="3" height="1" fill="#000"/><rect x="14" y="182" width="5" height="1" fill="#000"/>
<rect x="16" y="185" width="3" height="1" fill="#000"/>
<rect x="16" y="188" width="3" height="1" fill="#000"/>
<rect x="16" y="191" width="3" height="1" fill="#000"/>
<rect x="16" y="194" width="3" height="1" fill="#000"/>
<rect x="14" y="197" width="5" height="1" fill="#000"/>
<rect x="16" y="200" width="3" height="1" fill="#000"/>
<rect x="16" y="204" width="3" height="1" fill="#000"/>
<rect x="16" y="207" width="3" height="1" fill="#000"/>
<rect x="16" y="210" width="3" height="1" fill="#000"/>
<rect x="2" y="213" width="3" height="1" fill="#000"/><rect x="14" y="213" width="5" height="1" fill="#000"/>
<rect x="16" y="216" width="3" height="1" fill="#000"/>
<rect x="16" y="219" width="3" height="1" fill="#000"/>
<rect x="16" y="222" width="3" height="1" fill="#000"/>
<rect x="16" y="225" width="3" height="1" fill="#000"/>
<rect x="14" y="228" width="5" height="1" fill="#000"/>
<rect x="16" y="231" width="3" height="1" fill="#000"/>
<rect x="16" y="234" width="3" height="1" fill="#000"/>
<rect x="16" y="237" width="3" height="1" fill="#000"/>
<rect x="16" y="240" width="3" height="1" fill="#000"/>
<rect x="2" y="243" width="3" height="1" fill="#000"/><rect x="14" y="243" width="5" height="1" fill="#000"/>
<rect x="16" y="246" width="3" height="1" fill="#000"/>
<rect x="16" y="249" width="3" height="1" fill="#000"/>
<rect x="16" y="252" width="3" height="1" fill="#000"/>
<rect x="16" y="255" width="3" height="1" fill="#000"/>
<rect x="14" y="258" width="5" height="1" fill="#000"/>
<rect x="16" y="261" width="3" height="1" fill="#000"/>
<rect x="16" y="264" width="3" height="1" fill="#000"/>
<rect x="16" y="267" width="3" height="1" fill="#000"/>
<rect x="16" y="270" width="3" height="1" fill="#000"/>
<rect x="2" y="273" width="3" height="1" fill="#000"/><rect x="14" y="273" width="5" height="1" fill="#000"/>
<rect x="16" y="276" width="3" height="1" fill="#000"/>
<rect x="16" y="279" width="3" height="1" fill="#000"/>
<rect x="16" y="282" width="3" height="1" fill="#000"/>
<rect x="16" y="285" width="3" height="1" fill="#000"/>
<rect x="14" y="288" width="5" height="1" fill="#000"/>
<rect x="16" y="291" width="3" height="1" fill="#000"/>
<rect x="16" y="294" width="3" height="1" fill="#000"/>
<rect x="16" y="297" width="3" height="1" fill="#000"/>
<rect x="16" y="300" width="3" height="1" fill="#000"/>
<text transform="translate(13,2) rotate(-90)" text-anchor="end" font-family="Liberation Sans,sans-serif" font-size="10" fill="#000">0</text>
<text transform="translate(13,31.5) rotate(-90)" text-anchor="middle" font-family="Liberation Sans,sans-serif" font-size="10" fill="#000">2</text>
<text transform="translate(13,61.5) rotate(-90)" text-anchor="middle" font-family="Liberation Sans,sans-serif" font-size="10" fill="#000">4</text>
<text transform="translate(13,92.5) rotate(-90)" text-anchor="middle" font-family="Liberation Sans,sans-serif" font-size="10" fill="#000">6</text>
<text transform="translate(13,122.5) rotate(-90)" text-anchor="middle" font-family="Liberation Sans,sans-serif" font-size="10" fill="#000">8</text>
<text transform="translate(13,152.5) rotate(-90)" text-anchor="middle" font-family="Liberation Sans,sans-serif" font-size="10" fill="#000">10</text>
<text transform="translate(13,182.5) rotate(-90)" text-anchor="middle" font-family="Liberation Sans,sans-serif" font-size="10" fill="#000">12</text>
<text transform="translate(13,213.5) rotate(-90)" text-anchor="middle" font-family="Liberation Sans,sans-serif" font-size="10" fill="#000">14</text>
<text transform="translate(13,243.5) rotate(-90)" text-anchor="middle" font-family="Liberation Sans,sans-serif" font-size="10" fill="#000">16</text>
<text transform="translate(13,273.5) rotate(-90)" text-anchor="middle" font-family="Liberation Sans,sans-serif" font-size="10" fill="#000">18</text>
<text transform="translate(13,303.5) rotate(-90)" text-anchor="middle" font-family="Liberation Sans,sans-serif" font-size="10" fill="#000">20</text>
</svg>


<!-- page objects -->
<svg style="left:91px;top:221px" width="303" height="302" viewBox="91 221 303 302" shape-rendering="crispEdges" fill="none" stroke="#000" stroke-width="1" stroke-dasharray="4 3">
<rect x="135.5" y="252.5" width="214" height="60"/>
<line x1="91" y1="313.5" x2="394" y2="313.5"/>
<line x1="91" y1="371.5" x2="394" y2="371.5"/>
<line x1="91" y1="373.5" x2="394" y2="373.5"/>
<line x1="91" y1="433.5" x2="394" y2="433.5"/>
<rect x="135.5" y="433.5" width="214" height="59.500" stroke="#FFFF66" stroke-dasharray="none"/>
<rect x="135.5" y="433.5" width="214" height="59.500" stroke="#000080"/>
</svg>
<div class="doc" id="o1" style="left:135px;top:253px;width:215px;height:60px;font-size:47px;line-height:60px">9731610</div>
<div class="doc" id="o2" style="left:90px;top:315px;width:303px;height:58px;font-size:50px;line-height:58px;font-weight:bold">Header 90°</div>
<div class="doc" id="o3" style="left:91px;top:375px;width:303px;height:59px;font-size:49.500px;line-height:59px;font-weight:bold">3-way</div>
<div class="doc" id="o4" style="left:135px;top:434px;width:215px;height:59px;font-size:47px;line-height:59px">2.54mm</div>
<!-- handles -->
<div class="hd" style="left:132px;top:430px"></div><div class="hd" style="left:239px;top:430px"></div><div class="hd" style="left:346px;top:430px"></div>
<div class="hd" style="left:132px;top:460px"></div><div class="hd" style="left:346px;top:460px"></div>
<div class="hd" style="left:132px;top:490px"></div><div class="hd" style="left:239px;top:490px"></div><div class="hd" style="left:346px;top:490px"></div>
<div style="left:349px;top:432px;width:3px;height:1px;background:#fff"></div><div style="left:134px;top:432px;width:4px;height:1px;background:#ff0"></div><div style="left:135px;top:432px;width:1px;height:4px;background:#ff0"></div><div class="hd" style="left:356px;top:420px"></div><div class="hd" style="left:356px;top:460px"></div>

<!-- ruler markers --><svg style="left:131.0px;top:211.0px" width="9" height="9" viewBox="0 0 9 9"><path d="M4.500 1L8 4.500L4.500 8L1 4.500Z" fill="#fff" stroke="#000" stroke-width="1"/></svg><svg style="left:238.0px;top:211.0px" width="9" height="9" viewBox="0 0 9 9"><path d="M4.500 1L8 4.500L4.500 8L1 4.500Z" fill="#fff" stroke="#000" stroke-width="1"/></svg><svg style="left:345.0px;top:211.0px" width="9" height="9" viewBox="0 0 9 9"><path d="M4.500 1L8 4.500L4.500 8L1 4.500Z" fill="#fff" stroke="#000" stroke-width="1"/></svg><svg style="left:82.0px;top:429.0px" width="9" height="9" viewBox="0 0 9 9"><path d="M4.500 1L8 4.500L4.500 8L1 4.500Z" fill="#fff" stroke="#000" stroke-width="1"/></svg><svg style="left:82.0px;top:459.0px" width="9" height="9" viewBox="0 0 9 9"><path d="M4.500 1L8 4.500L4.500 8L1 4.500Z" fill="#fff" stroke="#000" stroke-width="1"/></svg><svg style="left:82.0px;top:489.0px" width="9" height="9" viewBox="0 0 9 9"><path d="M4.500 1L8 4.500L4.500 8L1 4.500Z" fill="#fff" stroke="#000" stroke-width="1"/></svg>
<!-- scrollbars -->
<div class="track" style="left:627px;top:221px;width:17px;height:308px"></div>
<div class="track" style="left:91px;top:529px;width:536px;height:17px"></div>
<div style="left:627px;top:529px;width:17px;height:17px;background:#ECE9D8"></div>
<div style="left:627px;top:220px;width:17px;height:8px;background:#ECE9D8;border:1px solid #000;border-width:1px 1px 1px 0"></div>
<div class="btn" style="left:627px;top:228px;width:17px;height:17px"></div>
<div class="btn" style="left:627px;top:512px;width:17px;height:17px"></div>
<div style="left:91px;top:529px;width:7px;height:17px;background:#ECE9D8;border:1px solid #000;border-width:0 1px 1px 0"></div>
<div class="btn" style="left:98px;top:529px;width:17px;height:17px"></div>
<div class="btn" style="left:610px;top:529px;width:17px;height:17px"></div>
<div style="left:632px;top:234px;width:0;height:0;border:4px solid transparent;border-bottom-color:#ACA899;border-top:none"></div>
<div style="left:632px;top:519px;width:0;height:0;border:4px solid transparent;border-top-color:#ACA899;border-bottom:none"></div>
<div style="left:104px;top:533px;width:0;height:0;border:4px solid transparent;border-right-color:#ACA899;border-left:none"></div>
<div style="left:617px;top:533px;width:0;height:0;border:4px solid transparent;border-left-color:#ACA899;border-right:none"></div>

<!-- right palette -->
<div class="vsh" style="left:644px;top:192px;height:28px"></div><div style="left:644px;top:220px;width:1px;height:326px;background:#F2F0E4"></div>
<div class="vhl" style="left:645px;top:192px;height:354px"></div>
<div class="hgrip" style="left:648px;top:194px;width:22px"></div>
<div class="hsep" style="left:650px;top:291px;width:20px"></div>
<div class="hsep" style="left:650px;top:407px;width:20px"></div>
<div class="hsep" style="left:650px;top:479px;width:20px"></div>
<div class="sh" style="left:645px;top:507px;width:28px"></div>
<div class="hl" style="left:645px;top:508px;width:28px"></div>


<!--ICONS5--><svg style="left:650px;top:204px" width="19" height="17" viewBox="0 0 19 17" ><g transform="translate(1,1)" color="#fff"><rect x="1.500" y="4.500" width="15" height="7" fill="none" stroke="currentColor" stroke-width="1"/><path d="M8.500 0.500L12.500 4.500M8.500 0.500L4.500 4.500M8.500 15.500L12.500 11.500M8.500 15.500L4.500 11.500M8.500 0.500V15.500" fill="none" stroke="currentColor" stroke-width="1"/></g><g color="#ACA899"><rect x="1.500" y="4.500" width="15" height="7" fill="none" stroke="currentColor" stroke-width="1"/><path d="M8.500 0.500L12.500 4.500M8.500 0.500L4.500 4.500M8.500 15.500L12.500 11.500M8.500 15.500L4.500 11.500M8.500 0.500V15.500" fill="none" stroke="currentColor" stroke-width="1"/></g></svg>
<svg style="left:651px;top:225px" width="18" height="17" viewBox="0 0 18 17" ><g transform="translate(1,1)" color="#fff"><rect x="5.500" y="0.500" width="6" height="15" fill="none" stroke="currentColor" stroke-width="1"/><path d="M0.500 8L4.500 4M0.500 8L4.500 12M16.500 8L12.500 4M16.500 8L12.500 12M0.500 8H16.500" fill="none" stroke="currentColor" stroke-width="1"/></g><g color="#ACA899"><rect x="5.500" y="0.500" width="6" height="15" fill="none" stroke="currentColor" stroke-width="1"/><path d="M0.500 8L4.500 4M0.500 8L4.500 12M16.500 8L12.500 4M16.500 8L12.500 12M0.500 8H16.500" fill="none" stroke="currentColor" stroke-width="1"/></g></svg>
<svg style="left:651px;top:248px" width="18" height="17" viewBox="0 0 18 17" ><g transform="translate(1,1)" color="#fff"><rect x="0.500" y="5.500" width="10" height="10" fill="none" stroke="currentColor" stroke-width="1"/><path d="M7.500 2.500C11 1 14 3 14 8" fill="none" stroke="currentColor" stroke-width="1"/><path d="M11.500 7H16.500L14 10Z" fill="currentColor"/></g><g color="#ACA899"><rect x="0.500" y="5.500" width="10" height="10" fill="none" stroke="currentColor" stroke-width="1"/><path d="M7.500 2.500C11 1 14 3 14 8" fill="none" stroke="currentColor" stroke-width="1"/><path d="M11.500 7H16.500L14 10Z" fill="currentColor"/></g></svg>
<svg style="left:650px;top:270px" width="19" height="17" viewBox="0 0 19 17" ><g transform="translate(1,1)" color="#fff"><path d="M7.500 2.500L14.500 9.500L8.500 15.500L1.500 8.500Z" fill="none" stroke="currentColor" stroke-width="1"/><path d="M9 1.500C13 0 16.500 2 16.500 5.500" fill="none" stroke="currentColor" stroke-width="1"/><path d="M14 5H18L16 8Z" fill="currentColor"/></g><g color="#ACA899"><path d="M7.500 2.500L14.500 9.500L8.500 15.500L1.500 8.500Z" fill="none" stroke="currentColor" stroke-width="1"/><path d="M9 1.500C13 0 16.500 2 16.500 5.500" fill="none" stroke="currentColor" stroke-width="1"/><path d="M14 5H18L16 8Z" fill="currentColor"/></g></svg>
<svg style="left:651px;top:297px" width="17" height="17" viewBox="0 0 17 17" ><g transform="translate(1,1)" color="#fff"><path d="M8 8L15.5 8.0" fill="none" stroke="currentColor" stroke-width="1"/><path d="M8 8L13.3 13.3" fill="none" stroke="currentColor" stroke-width="1"/><path d="M8 8L8.0 15.5" fill="none" stroke="currentColor" stroke-width="1"/><path d="M8 8L2.7 13.3" fill="none" stroke="currentColor" stroke-width="1"/><path d="M8 8L0.5 8.0" fill="none" stroke="currentColor" stroke-width="1"/><path d="M8 8L2.7 2.7" fill="none" stroke="currentColor" stroke-width="1"/><path d="M8 8L8.0 0.5" fill="none" stroke="currentColor" stroke-width="1"/><path d="M8 8L13.3 2.7" fill="none" stroke="currentColor" stroke-width="1"/><circle cx="8" cy="8" r="4.500" fill="#ECE9D8" stroke="currentColor"/></g><g color="#ACA899"><path d="M8 8L15.5 8.0" fill="none" stroke="currentColor" stroke-width="1"/><path d="M8 8L13.3 13.3" fill="none" stroke="currentColor" stroke-width="1"/><path d="M8 8L8.0 15.5" fill="none" stroke="currentColor" stroke-width="1"/><path d="M8 8L2.7 13.3" fill="none" stroke="currentColor" stroke-width="1"/><path d="M8 8L0.5 8.0" fill="none" stroke="currentColor" stroke-width="1"/><path d="M8 8L2.7 2.7" fill="none" stroke="currentColor" stroke-width="1"/><path d="M8 8L8.0 0.5" fill="none" stroke="currentColor" stroke-width="1"/><path d="M8 8L13.3 2.7" fill="none" stroke="currentColor" stroke-width="1"/><circle cx="8" cy="8" r="4.500" fill="#ECE9D8" stroke="currentColor"/></g></svg>
<svg style="left:651px;top:320px" width="17" height="17" viewBox="0 0 17 17" ><g transform="translate(1,1)" color="#fff"><circle cx="7.500" cy="7.500" r="7" fill="none" stroke="currentColor" stroke-width="1"/><path d="M7.500 0.500A7 7 0 0 1 7.500 14.500Z" fill="currentColor"/></g><g color="#ACA899"><circle cx="7.500" cy="7.500" r="7" fill="none" stroke="currentColor" stroke-width="1"/><path d="M7.500 0.500A7 7 0 0 1 7.500 14.500Z" fill="currentColor"/></g></svg>
<svg style="left:651px;top:341px" width="16" height="16" viewBox="0 0 16 16" ><circle cx="7.500" cy="4" r="3.200" fill="#ACA899"/><circle cx="3.700" cy="11" r="3.200" fill="#ACA899"/><circle cx="11.300" cy="11" r="3.200" fill="#ACA899"/></svg>
<svg style="left:651px;top:363px" width="16" height="16" viewBox="0 0 16 16" ><circle cx="7.500" cy="7.500" r="7" fill="#ACA899"/><path d="M1.500 6C3 3 6 2 7 4C8 6 5 8 5.500 10C6 12 4 13.500 3 12C1.500 10.500 1 8 1.500 6Z" fill="#ECE9D8"/><circle cx="4" cy="11" r="1" fill="#ACA899"/></svg>
<svg style="left:651px;top:385px" width="17" height="17" viewBox="0 0 17 17" ><g transform="translate(1,1)" color="#fff"><circle cx="7.500" cy="7.500" r="7" fill="none" stroke="currentColor" stroke-width="1"/><ellipse cx="7.500" cy="9.500" rx="2.300" ry="3" fill="none" stroke="currentColor" stroke-width="1.300"/><path d="M4.500 2.500L6.500 6.500M10.500 2.500L8.500 6.500" fill="none" stroke="currentColor" stroke-width="1"/></g><g color="#ACA899"><circle cx="7.500" cy="7.500" r="7" fill="none" stroke="currentColor" stroke-width="1"/><ellipse cx="7.500" cy="9.500" rx="2.300" ry="3" fill="none" stroke="currentColor" stroke-width="1.300"/><path d="M4.500 2.500L6.500 6.500M10.500 2.500L8.500 6.500" fill="none" stroke="currentColor" stroke-width="1"/></g></svg>
<svg style="left:651px;top:413px" width="16" height="16" viewBox="0 0 16 16" ><path d="M0.500 3.500H15.500M0.500 3.500L3 1M0.500 3.500L3 6M15.500 3.500L13 1M15.500 3.500L13 6" fill="none" stroke="#ACA899"/><path d="M2.5 15V11" stroke="#ACA899" stroke-dasharray="1 1"/><path d="M4.5 15V9" stroke="#ACA899" stroke-dasharray="1 1"/><path d="M6.5 15V10" stroke="#ACA899" stroke-dasharray="1 1"/><path d="M8.5 15V8" stroke="#ACA899" stroke-dasharray="1 1"/><path d="M10.5 15V9" stroke="#ACA899" stroke-dasharray="1 1"/><path d="M12.5 15V10" stroke="#ACA899" stroke-dasharray="1 1"/><path d="M1.500 12C1.500 8 4 6 7 6" fill="none" stroke="#ACA899"/><path d="M7 6C11 5.500 14 7 14.500 10.500H7Z" fill="#ACA899"/></svg>
<svg style="left:651px;top:435px" width="16" height="16" viewBox="0 0 16 16" ><path d="M0.500 3.500H15.500M0.500 3.500L3 1M0.500 3.500L3 6M15.500 3.500L13 1M15.500 3.500L13 6" fill="none" stroke="#ACA899"/><path d="M2.5 15V11" stroke="#ACA899" stroke-dasharray="1 1"/><path d="M4.5 15V9" stroke="#ACA899" stroke-dasharray="1 1"/><path d="M6.5 15V10" stroke="#ACA899" stroke-dasharray="1 1"/><path d="M8.5 15V8" stroke="#ACA899" stroke-dasharray="1 1"/><path d="M10.5 15V9" stroke="#ACA899" stroke-dasharray="1 1"/><path d="M12.5 15V10" stroke="#ACA899" stroke-dasharray="1 1"/><path d="M1 15.500H15M1.500 7V15M14.500 7V15" fill="none" stroke="#ACA899" stroke-dasharray="1 1"/></svg>
<svg style="left:651px;top:457px" width="16" height="16" viewBox="0 0 16 16" ><path d="M0.500 3.500H15.500M0.500 3.500L3 1M0.500 3.500L3 6M15.500 3.500L13 1M15.500 3.500L13 6" fill="none" stroke="#ACA899"/><path d="M2.5 15V11" stroke="#ACA899" stroke-dasharray="1 1"/><path d="M4.5 15V9" stroke="#ACA899" stroke-dasharray="1 1"/><path d="M6.5 15V10" stroke="#ACA899" stroke-dasharray="1 1"/><path d="M8.5 15V8" stroke="#ACA899" stroke-dasharray="1 1"/><path d="M10.5 15V9" stroke="#ACA899" stroke-dasharray="1 1"/><path d="M12.5 15V10" stroke="#ACA899" stroke-dasharray="1 1"/><path d="M1 15.500H15M1.500 7V15M14.500 7V15" fill="none" stroke="#ACA899" stroke-dasharray="1 1"/></svg>
<svg style="left:653px;top:488px" width="14" height="13" viewBox="0 0 14 13" ><path d="M1 1.500L5 3L8 0.500L9 3L13 2L11.500 6.500L10 8V12L6 11.500L3.500 12L4 8L1.500 6Z" fill="#ACA899"/></svg><!--/ICONS5-->
<!-- status bar -->

<div class="sh" style="left:4px;top:546px;width:669px"></div><div class="hl" style="left:4px;top:547px;width:669px"></div>
<div class="t" style="left:5px;top:550px;letter-spacing:-0.07px">Schakelt de taakbalk "Database" in of uit.\ nTaakbalk "Database"</div>
<div class="t" style="left:355px;top:550px">X</div>
<div class="pane" style="left:368px;top:550px;width:39px;height:15px"></div>
<div class="t" style="left:411px;top:550px">Y</div>
<div class="pane" style="left:424px;top:550px;width:39px;height:15px"></div>
<div class="t" style="left:467px;top:550px">B</div>
<div class="pane" style="left:480px;top:550px;width:39px;height:15px"></div>
<div class="t" style="left:523px;top:550px">H</div>
<div class="pane" style="left:537px;top:550px;width:39px;height:15px"></div>
<div class="t" style="left:582px;top:550px;letter-spacing:-1.5px">mm</div>
<div class="pane" style="left:603px;top:550px;width:52px;height:15px"></div>
<div class="t" style="left:606px;top:550px;letter-spacing:-0.2px;transform:scaleY(1.08)">S1: 1 (96)</div>
<svg style="left:659px;top:552px" width="13" height="13" viewBox="0 0 13 13"><path d="M12 1L1 12M12 5L5 12M12 9L9 12" stroke="#ACA899" stroke-width="1.5"/><path d="M12 0L0 12M12 4L4 12M12 8L8 12" stroke="#fff" stroke-width="1"/></svg>


<!-- menus -->
<!--MENUS--><div class="menu" style="left:134px;top:49px;width:191px;height:160px"><div class="it" style="top:2px;width:185px"><svg style="left:4px;top:6px" width="8" height="8" viewBox="0 0 8 8"><path d="M0.500 3L3 5.500L7.500 1" fill="none" stroke="#000" stroke-width="2"/></svg><span class="t" style="left:17px;top:1px;line-height:15px;height:15px;letter-spacing:-0.19px">Volledig tonen</span></div><div class="it" style="top:19px;width:185px"><svg style="left:4px;top:6px" width="8" height="8" viewBox="0 0 8 8"><path d="M0.500 3L3 5.500L7.500 1" fill="none" stroke="#000" stroke-width="2"/></svg><span class="t" style="left:17px;top:1px;line-height:15px;height:15px;letter-spacing:0.01px">Objectranden tonen</span></div><div class="msep" style="top:39px;width:183px"></div><div class="it" style="top:45px;width:185px"><span class="t" style="left:17px;top:1px;line-height:15px;height:15px;letter-spacing:-0.42px">Welkom</span></div><div class="it sel" style="top:62px;width:185px"><span class="t" style="left:17px;top:1px;line-height:15px;height:15px;letter-spacing:-0.33px">Symboolbalken</span><svg style="left:175px;top:5px" width="4" height="7" viewBox="0 0 4 7"><path d="M0 0L4 3.500L0 7Z" fill="#fff"/></svg></div><div class="it" style="top:79px;width:185px"><svg style="left:4px;top:6px" width="8" height="8" viewBox="0 0 8 8"><path d="M0.500 3L3 5.500L7.500 1" fill="none" stroke="#000" stroke-width="2"/></svg><span class="t" style="left:17px;top:1px;line-height:15px;height:15px;letter-spacing:-0.11px">Statusbalk</span></div><div class="it" style="top:96px;width:185px"><svg style="left:4px;top:6px" width="8" height="8" viewBox="0 0 8 8"><path d="M0.500 3L3 5.500L7.500 1" fill="none" stroke="#000" stroke-width="2"/></svg><span class="t" style="left:17px;top:1px;line-height:15px;height:15px;letter-spacing:-0.40px">Liniaal</span></div><div class="msep" style="top:116px;width:183px"></div><div class="it" style="top:122px;width:185px"><span class="t" style="left:17px;top:1px;line-height:15px;height:15px;letter-spacing:-0.06px">Zoom vergroten</span></div><div class="it" style="top:139px;width:185px"><span class="t" style="left:17px;top:1px;line-height:15px;height:15px;letter-spacing:-0.26px">Zoom op gehele document</span><span class="t" style="left:154px;top:1px;line-height:15px;letter-spacing:-1px">F4</span></div></div>
<div class="menu" style="left:319px;top:109px;width:119px;height:167px"><div class="it" style="top:2px;width:113px"><svg style="left:4px;top:6px" width="8" height="8" viewBox="0 0 8 8"><path d="M0.500 3L3 5.500L7.500 1" fill="none" stroke="#000" stroke-width="2"/></svg><span class="t" style="left:17px;top:1px;line-height:15px;height:15px;letter-spacing:-0.30px">Bewerken</span></div><div class="it sel" style="top:19px;width:113px"><svg style="left:4px;top:6px" width="8" height="8" viewBox="0 0 8 8"><path d="M0.500 3L3 5.500L7.500 1" fill="none" stroke="#fff" stroke-width="2"/></svg><span class="t" style="left:17px;top:1px;line-height:15px;height:15px;letter-spacing:-0.21px">Database</span></div><div class="it" style="top:36px;width:113px"><svg style="left:4px;top:6px" width="8" height="8" viewBox="0 0 8 8"><path d="M0.500 3L3 5.500L7.500 1" fill="none" stroke="#000" stroke-width="2"/></svg><span class="t" style="left:17px;top:1px;line-height:15px;height:15px;letter-spacing:-0.51px">Help</span></div><div class="it" style="top:53px;width:113px"><svg style="left:4px;top:6px" width="8" height="8" viewBox="0 0 8 8"><path d="M0.500 3L3 5.500L7.500 1" fill="none" stroke="#000" stroke-width="2"/></svg><span class="t" style="left:17px;top:1px;line-height:15px;height:15px;letter-spacing:-0.25px">Formaat</span></div><div class="it" style="top:70px;width:113px"><svg style="left:4px;top:6px" width="8" height="8" viewBox="0 0 8 8"><path d="M0.500 3L3 5.500L7.500 1" fill="none" stroke="#000" stroke-width="2"/></svg><span class="t" style="left:17px;top:1px;line-height:15px;height:15px;letter-spacing:0.19px">Invoer</span></div><div class="it" style="top:87px;width:113px"><svg style="left:4px;top:6px" width="8" height="8" viewBox="0 0 8 8"><path d="M0.500 3L3 5.500L7.500 1" fill="none" stroke="#000" stroke-width="2"/></svg><span class="t" style="left:17px;top:1px;line-height:15px;height:15px;letter-spacing:-0.35px">Elementen</span></div><div class="it" style="top:104px;width:113px"><svg style="left:4px;top:6px" width="8" height="8" viewBox="0 0 8 8"><path d="M0.500 3L3 5.500L7.500 1" fill="none" stroke="#000" stroke-width="2"/></svg><span class="t" style="left:17px;top:1px;line-height:15px;height:15px;letter-spacing:-0.17px">Uitlijnen</span></div><div class="it" style="top:121px;width:113px"><svg style="left:4px;top:6px" width="8" height="8" viewBox="0 0 8 8"><path d="M0.500 3L3 5.500L7.500 1" fill="none" stroke="#000" stroke-width="2"/></svg><span class="t" style="left:17px;top:1px;line-height:15px;height:15px;letter-spacing:-0.26px">Beeldbewerking</span></div><div class="msep" style="top:141px;width:111px"></div><div class="it" style="top:147px;width:113px"><span class="t" style="left:17px;top:1px;line-height:15px;height:15px;letter-spacing:-0.35px">Bekijken</span><svg style="left:103px;top:5px" width="4" height="7" viewBox="0 0 4 7"><path d="M0 0L4 3.500L0 7Z" fill="#000"/></svg></div></div><!--/MENUS-->

</div></body></html>
